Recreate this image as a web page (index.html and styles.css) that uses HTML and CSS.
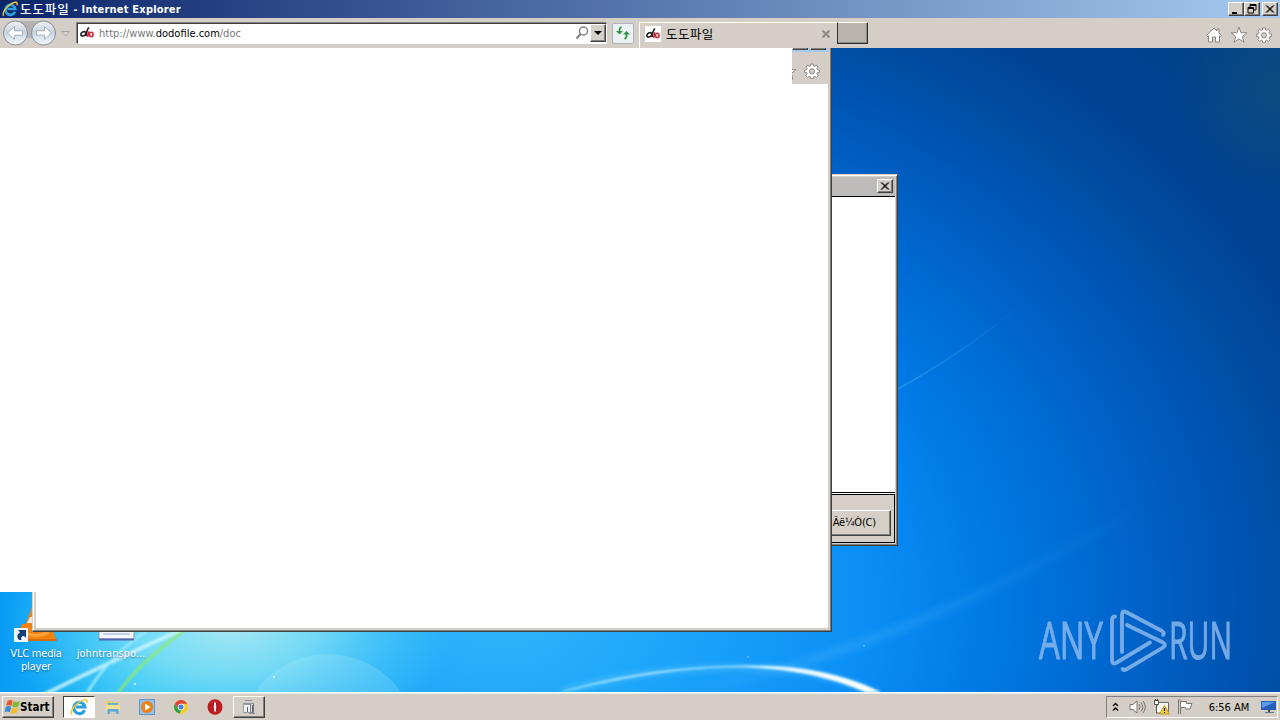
FILE: index.html
```
<!DOCTYPE html>
<html lang="ko">
<head>
    <meta charset="UTF-8">
    <title>도도파일 - Internet Explorer</title>
    <link rel="stylesheet" href="styles.css">
</head>
<body>
    <svg width="0" height="0" class="defs">
        <defs>
            <symbol id="ie" viewBox="0 0 16 16">
                <path d="M13 10.8A5 5 0 1 1 13.300 8H5.500" fill="none" stroke="#2b9fe0" stroke-width="2.700"/>
                <path d="M5.500 7.900h5" stroke="#2b9fe0" stroke-width="1.500"/>
                <path d="M1.700 14.800C-1 11 8 2 13.500 1.300c2-.2 2 1.500 1.300 3" fill="none" stroke="#f0c530" stroke-width="1.400"/>
            </symbol>
            <symbol id="gear" viewBox="0 0 16 16">
                <path d="M6.700 1h2.600l.3 2 1.100.5 1.700-1.300 1.800 1.900-1.300 1.600.5 1.100 2 .3v2.400l-2 .3-.5 1.200 1.300 1.600-1.800 1.900-1.700-1.300-1.100.5-.3 2H6.700l-.3-2-1.100-.5-1.700 1.300-1.800-1.900L3.100 11l-.5-1.200-2-.3V7.100l2-.3.5-1.100-1.300-1.600 1.800-1.900 1.700 1.300L6.400 3z" fill="#fff" stroke="#8b8681"/>
                <circle cx="8" cy="8.300" r="2.600" fill="#d4cec6" stroke="#8b8681"/>
            </symbol>
            <symbol id="star" viewBox="0 0 18 18">
                <path d="M9 1.200l2 5.500 5.900.1-4.600 3.600 1.600 5.800L9 12.900l-4.900 3.300 1.600-5.800L1.100 6.800l5.900-.1z" fill="#fff" stroke="#8b8681"/>
            </symbol>
            <symbol id="close" viewBox="0 0 10 10">
                <path d="M1 1.500l7 7M2 1.500l7 7M8 1.500l-7 7M9 1.500l-7 7" stroke="#000" stroke-width="1" fill="none"/>
            </symbol>
            <symbol id="site" viewBox="0 0 16 16">
                <path d="M10 2.500Q7.500 5 7.200 11M6.800 7.500c-1.800-1.800-5 0-4.900 2.200.1 2 3.400 1.600 4.800-.2z" fill="none" stroke="#222" stroke-width="1.700"/>
                <path d="M9.800 6.400L8.600 12" stroke="#c9283c" stroke-width="1.700"/>
                <ellipse cx="12.300" cy="9.400" rx="1.800" ry="2.200" fill="none" stroke="#c9283c" stroke-width="1.600"/>
            </symbol>
        </defs>
    </svg>

    <div class="screen">
        <div class="desktop">
            <svg class="wallpaper" width="1280" height="692" viewBox="0 0 1280 692">
                <defs>
                    <radialGradient id="sky" gradientUnits="userSpaceOnUse" cx="0" cy="0" r="1" gradientTransform="translate(500 600) scale(1125 875)">
                        <stop offset="0" stop-color="#2fb8f9"/>
                        <stop offset=".18" stop-color="#1aa2fa"/>
                        <stop offset=".33" stop-color="#0a8ef5"/>
                        <stop offset=".44" stop-color="#0079e4"/>
                        <stop offset=".54" stop-color="#0067d0"/>
                        <stop offset=".66" stop-color="#0053b0"/>
                        <stop offset=".78" stop-color="#004493"/>
                        <stop offset="1" stop-color="#004080"/>
                    </radialGradient>
                    <linearGradient id="left">
                        <stop offset="0" stop-color="#0a9bf5"/>
                        <stop offset=".35" stop-color="#28c4f8"/>
                        <stop offset="1" stop-color="#38c4f8" stop-opacity="0"/>
                    </linearGradient>
                    <radialGradient id="glow" gradientUnits="userSpaceOnUse" cx="0" cy="0" r="1" gradientTransform="translate(230 625) scale(225 130)">
                        <stop offset="0" stop-color="#a8e8f4"/>
                        <stop offset=".4" stop-color="#85e2f5" stop-opacity=".8"/>
                        <stop offset="1" stop-color="#4cd2f8" stop-opacity="0"/>
                    </radialGradient>
                    <radialGradient id="corner">
                        <stop offset="0" stop-color="#17507c" stop-opacity=".6"/>
                        <stop offset="1" stop-color="#17507c" stop-opacity="0"/>
                    </radialGradient>
                    <linearGradient id="arc" gradientUnits="userSpaceOnUse" x1="560" y1="0" x2="880" y2="0">
                        <stop offset="0" stop-color="#bdefff" stop-opacity=".7"/>
                        <stop offset=".6" stop-color="#dff8ff"/>
                        <stop offset="1" stop-color="#fff"/>
                    </linearGradient>
                    <linearGradient id="beam" gradientUnits="userSpaceOnUse" x1="690" y1="0" x2="1150" y2="0">
                        <stop offset="0" stop-color="#6cc8ff" stop-opacity="0"/>
                        <stop offset=".3" stop-color="#6cc8ff" stop-opacity=".2"/>
                        <stop offset="1" stop-color="#6cc8ff" stop-opacity="0"/>
                    </linearGradient>
                    <linearGradient id="ray" gradientUnits="userSpaceOnUse" x1="890" y1="0" x2="1020" y2="0">
                        <stop offset="0" stop-color="#5cc0ff" stop-opacity=".4"/>
                        <stop offset="1" stop-color="#5cc0ff" stop-opacity="0"/>
                    </linearGradient>
                    <filter id="soft" x="-20%" y="-50%" width="140%" height="200%"><feGaussianBlur stdDeviation="3"/></filter>
                    <filter id="edge" x="-20%" y="-50%" width="140%" height="200%"><feGaussianBlur stdDeviation=".8"/></filter>
                </defs>
                <rect width="1280" height="692" fill="url(#sky)"/>
                <rect y="560" width="430" height="132" fill="url(#left)"/>
                <rect y="490" width="460" height="202" fill="url(#glow)"/>
                <circle cx="1280" cy="90" r="110" fill="url(#corner)"/>
                <circle cx="328" cy="743" r="89" fill="#b8f0fa" opacity=".2"/>
                <path d="M690 692Q930 640 1150 500" fill="none" stroke="url(#beam)" stroke-width="10" filter="url(#soft)"/>
                <path d="M896 390Q965 352 1020 305" fill="none" stroke="url(#ray)" stroke-width="1.500"/>
                <path d="M562 692C640 668 720 666 765 668S850 682 878 694" fill="none" stroke="#7fd8ff" stroke-width="4" opacity=".5" filter="url(#soft)"/>
                <path d="M562 692C640 669 710 666 750 667Q815 670 866 692L880 692Q825 665 750 666Q665 666 562 692z" fill="url(#arc)" stroke="url(#arc)" stroke-width=".6" filter="url(#edge)"/>
                <g fill="none" filter="url(#edge)">
                    <path d="M43 695Q110 662 185 628" stroke="#d4f8ff" stroke-width="4" opacity=".8"/>
                    <path d="M87 693Q110 655 148 630" stroke="#9eeaff" stroke-width="2.500"/>
                    <path d="M118 693Q140 662 185 630" stroke="#8eea6b" stroke-width="2.500"/>
                </g>
                <g fill="#d8f8ff" opacity=".7">
                    <circle cx="135" cy="684" r="1.300"/><circle cx="274" cy="677" r="1.200"/>
                    <circle cx="748" cy="657" r=".8"/><circle cx="864" cy="646" r=".8"/>
                </g>
            </svg>

            <div class="shortcut vlc">
                <svg width="48" height="48" viewBox="0 0 48 48">
                    <path d="M24 1l12 31H12z" fill="#f08018"/>
                    <path d="M18 21h12l3 6H15z" fill="#e8e8e8"/>
                    <path d="M10 28h28l7 17H3z" fill="#f08210"/>
                    <path d="M12 34q12 8 24 0l1 4q-13 6-26 0z" fill="#f9a23c"/>
                    <path d="M3 44h42" stroke="#d96a0a" stroke-width="2"/>
                    <rect x="2" y="32" width="14" height="14" fill="#f4f7fb"/>
                    <path d="M7 44q-4-5 1-7.500L6 34h8v8l-2.200-2.200Q8 41 9.500 44z" fill="#123f78"/>
                </svg>
                <span>VLC media player</span>
            </div>
            <div class="shortcut doc">
                <svg width="48" height="48" viewBox="0 0 48 48">
                    <path d="M12 1h35v42H12z" fill="#f2f6fd" stroke="#8b9bc9"/>
                    <path d="M16 38h27" stroke="#9da6df"/>
                    <path d="M12 43.500h35" stroke="#5265a8" stroke-width="2"/>
                </svg>
                <span>johntranspo...</span>
            </div>

            <svg class="watermark" width="210" height="80" viewBox="0 0 210 80">
                <g class="watermark-text">
                    <text x="4" y="53" textLength="64" lengthAdjust="spacingAndGlyphs">ANY</text>
                    <text x="134" y="53" textLength="63" lengthAdjust="spacingAndGlyphs">RUN</text>
                </g>
                <path d="M80 10.500q-3 0-3 4V54q0 5 4 3L115 36.500M87 46V9q0-5 4-3l36 19q3 2 1 4M92 19l36 17.500q4 2.500 0 5L92 63q-4 2-4.500 0" fill="none" stroke="#8ab8ed" stroke-width="3.800" stroke-linecap="round"/>
            </svg>

            <div class="dialog">
                <div class="dialog-title"><span class="win-btn"><svg width="10" height="10"><use href="#close"/></svg></span></div>
                <div class="dialog-body"></div>
                <div class="dialog-footer"><div class="dialog-btn">Ãë¼Ò(C)</div></div>
            </div>

            <div class="popup">
                <div class="popup-top">
                    <div class="popup-title"><span class="win-btn"></span><span class="win-btn"></span></div>
                    <div class="popup-tools">
                        <svg width="18" height="18"><use href="#star"/></svg>
                        <svg width="16" height="16"><use href="#gear"/></svg>
                    </div>
                </div>
            </div>

            <div class="browser">
                <div class="titlebar">
                    <svg width="16" height="16"><use href="#ie"/></svg>
                    <div class="title"><span class="title-ko">도도파일</span><span>- Internet Explorer</span></div>
                    <div class="win-buttons">
                        <span class="win-btn"><svg width="10" height="10"><path d="M1 8h5v2H1z"/></svg></span>
                        <span class="win-btn"><svg width="10" height="10"><path d="M3 4V.500h6V6H7M3 1.500h6M1 3.500h5.500V9H1zM1 4.500h5" fill="none" stroke="#000"/></svg></span>
                        <span class="win-btn gap"><svg width="10" height="10"><use href="#close"/></svg></span>
                    </div>
                </div>
                <div class="toolbar">
                    <svg class="nav" width="74" height="30" viewBox="0 0 74 30">
                        <defs>
                            <linearGradient id="btn" x2="0" y2="1">
                                <stop offset="0" stop-color="#f1f4f6"/>
                                <stop offset=".45" stop-color="#c8d3de"/>
                                <stop offset="1" stop-color="#f4fbff"/>
                            </linearGradient>
                        </defs>
                        <path d="M15 3H43V22Q29 18 15 22z" fill="#b5b3b1"/>
                        <circle cx="15.500" cy="15" r="12" fill="url(#btn)" stroke="#858e97"/>
                        <circle cx="43.500" cy="15" r="12" fill="url(#btn)" stroke="#858e97"/>
                        <path d="M7.500 15l7-6.500v4.300h8v4.400h-8v4.300z" fill="#fff" stroke="#a3afb9"/>
                        <path d="M51.500 15l-7-6.500v4.300h-8v4.400h8v4.300z" fill="#fff" stroke="#a3afb9"/>
                        <path d="M61.500 13.500h8l-4 4.500z" fill="#d7d2cb" stroke="#aaa59d"/>
                    </svg>
                    <div class="address">
                        <svg width="16" height="16"><use href="#site"/></svg>
                        <span class="url">http://www.<b>dodofile.com</b>/doc</span>
                        <svg width="15" height="16" viewBox="0 0 15 16"><circle cx="8.500" cy="6" r="4" fill="none" stroke="#828282" stroke-width="1.500"/><path d="M5.500 9L1.500 13.500" stroke="#828282" stroke-width="2.200"/></svg>
                        <span class="drop"><svg width="8" height="4"><path d="M0 0h8L4 4z"/></svg></span>
                    </div>
                    <div class="refresh">
                        <svg width="16" height="16" viewBox="0 0 16 16" fill="none" stroke="#2f9544" stroke-width="1.700">
                            <path d="M6.500 2Q4 3 4.500 7"/><path d="M9.500 14Q12 13 11.500 8"/>
                            <path d="M1 6h7L4.500 9.500zM8 9.500h7L11.500 6z" fill="#2f9544" stroke="none"/>
                        </svg>
                    </div>
                    <div class="tab">
                        <span class="favicon"><svg width="16" height="16"><use href="#site"/></svg></span>
                        <span class="tab-title">도도파일</span>
                        <svg width="8" height="8"><path d="M.500.500l7 7M7.500.500l-7 7" stroke="#8d8984" stroke-width="2"/></svg>
                    </div>
                    <div class="new-tab"></div>
                    <div class="tools">
                        <svg width="18" height="18" viewBox="0 0 18 18"><path d="M1.500 9.500L9 2l3 3V3h2v4l2.500 2.500-1 1-1-.8V16h-4v-5h-3v5h-4V9.700l-1 .8z" fill="#fff" stroke="#8b8681"/></svg>
                        <svg width="18" height="18"><use href="#star"/></svg>
                        <svg width="16" height="18" viewBox="0 0 16 16"><use href="#gear"/></svg>
                    </div>
                </div>
                <div class="page"></div>
            </div>
        </div>

        <div class="taskbar">
            <div class="start">
                <svg width="16" height="16" viewBox="0 0 16 16">
                    <path d="M3.500 2q2.500-1.800 5.200-.3L7.400 7q-2.500-1.300-5.300 0z" fill="#e9582b"/>
                    <path d="M9.500 2.300q3 1.500 6.300-.2L14.300 7.600q-3 1.500-6.200 0z" fill="#7fbb35"/>
                    <path d="M1.900 7.900q2.700-1.500 5.300-.2L5.900 13.200q-2.700-1.500-5.400 0z" fill="#328fd8"/>
                    <path d="M7.900 8.400q3 1.500 6.200 0l-1.400 5.700q-3 1.500-6.200-.2z" fill="#f6bf2a"/>
                </svg>
                <span>Start</span>
            </div>
            <div class="task active"><svg width="18" height="18"><use href="#ie"/></svg></div>
            <div class="task">
                <svg width="16" height="16" viewBox="0 0 16 16">
                    <path d="M1 2h5l1 1h7v9H1z" fill="#e9cb6a"/><path d="M3 4h10v3H3z" fill="#62b6d4"/>
                    <path d="M1 6h14v6H1z" fill="#f6e08f"/><path d="M2.500 15v-5h11v5H11v-2.500H5V15z" fill="#58a9df"/>
                </svg>
            </div>
            <div class="task">
                <svg width="16" height="16" viewBox="0 0 16 16">
                    <rect x=".500" y=".500" width="15" height="15" fill="#95bfe5" stroke="#6099cd"/><circle cx="8" cy="8" r="6" fill="#ef8110"/><path d="M6 4.500l5.500 3.500L6 11.500z" fill="#fff"/>
                </svg>
            </div>
            <div class="task">
                <svg width="14" height="14" viewBox="0 0 14 14">
                    <circle cx="7" cy="7" r="7" fill="#f7cd2c"/><path d="M1 3.500A7 7 0 0 1 13.100 3.700H7L4 8.700z" fill="#df4435"/>
                    <path d="M1 3.500l3 5.200 3 1.500-1.500 3.600A7 7 0 0 1 1 3.500z" fill="#2b9d50"/><circle cx="7" cy="7" r="3.300" fill="#fff"/><circle cx="7" cy="7" r="2.500" fill="#477fe5"/>
                </svg>
            </div>
            <div class="task">
                <svg width="16" height="16" viewBox="0 0 16 16"><ellipse cx="8" cy="8" rx="7.500" ry="7.700" fill="#bd1c20"/><ellipse cx="8" cy="8" rx="1.900" ry="5.500" fill="#f8e8e8" stroke="#8a0d11"/></svg>
            </div>
            <div class="task raised">
                <svg width="18" height="18" viewBox="0 0 18 18">
                    <path d="M3.500 6.500h7v8h-7z" fill="#f1f2f5" stroke="#989ba7"/><path d="M10.500 5.500h3v9h-3z" fill="#e2e2e6" stroke="#777985"/>
                    <path d="M5 2.500h7M3 5.500h10M9 15.500h6" stroke="#8d8f9b"/><path d="M7.500 9v5M12.500 7v7" stroke="#5a5c68"/>
                </svg>
            </div>
            <div class="tray">
                <svg width="7" height="10" viewBox="0 0 7 10"><path d="M1 4l2.500-2.500L6 4M1 8.500L3.500 6 6 8.500" fill="none" stroke="#000" stroke-width="1.300"/></svg>
                <svg width="17" height="16" viewBox="0 0 17 16"><path d="M1 5.500h3L8 2v12l-4-3.500H1z" fill="#fff" stroke="#77736e"/><path d="M10 5q2 3 0 6M12 3.500q3.500 4.500 0 9M14 2q4.500 6 0 12" fill="none" stroke="#77736e"/></svg>
                <svg width="17" height="16" viewBox="0 0 17 16">
                    <path d="M4.500 3.500h11v10h-11z" fill="#f4f4f0" stroke="#6d6962"/><path d="M1.500 1.500h4v4h-4zM3.500 5v9h5" fill="#fff" stroke="#55524d"/><path d="M2.500 0v2M4.500 0v2" stroke="#333"/>
                    <path d="M11.500 6.500l4.800 8.500H6.700z" fill="#f4d32c" stroke="#c89c13"/><path d="M11.500 9v3M11.500 13v1" stroke="#222" stroke-width="1.200"/>
                </svg>
                <svg width="17" height="16" viewBox="0 0 17 16"><path d="M1.500 1v14M3.500 2v13M1.500 1h2" stroke="#77736e"/><path d="M3.500 2.500h6v2h5.500l-2 5.500H9L8.500 8.500h-5z" fill="#fff" stroke="#77736e"/></svg>
                <span class="clock">6:56 AM</span>
                <svg width="16" height="14" viewBox="0 0 16 14"><path d="M0 1h15v9H0z" fill="#255fb8"/><path d="M1 2h13L1 8z" fill="#5d9be4"/><path d="M7 10h2v2H7z" fill="#444"/><path d="M4 12h9v1H4z" fill="#64748d"/></svg>
            </div>
        </div>
    </div>
</body>
</html>
```
FILE: styles.css
```
* {
    box-sizing: border-box;
}

body {
    margin: 0;
    overflow: hidden;
    font-family: "DejaVu Sans Condensed", "DejaVu Sans", "Noto Sans CJK KR", sans-serif;
    font-size: 11px;
    color: #000;
}

svg {
    display: block;
    flex: none;
}

.defs {
    position: absolute;
}

.screen {
    display: flex;
    flex-direction: column;
    width: 1280px;
    height: 720px;
}

.desktop {
    position: relative;
    height: 692px;
    overflow: hidden;
}

.wallpaper {
    position: absolute;
}

/* desktop icons */
.shortcut {
    position: absolute;
    display: flex;
    flex-direction: column;
    align-items: center;
    gap: 3px;
    width: 72px;
    color: #fff;
    line-height: 13px;
    letter-spacing: -0.2px;
    text-align: center;
    text-shadow: 0 1px 2px rgba(0, 50, 100, 0.6);
}

.vlc {
    left: 0;
    top: 596px;
}

.vlc span {
    width: 56px;
}

.doc {
    left: 75px;
    top: 596px;
    letter-spacing: 0;
}

.watermark {
    position: absolute;
    left: 1035px;
    top: 606px;
    overflow: visible;
    opacity: 0.85;
}

.watermark-text {
    font-family: "Open Sans", sans-serif;
    font-size: 51px;
    fill: #8ab8ed;
    stroke: #8ab8ed;
    stroke-width: 1px;
}

/* windows */
.win-btn {
    display: flex;
    align-items: center;
    justify-content: center;
    width: 16px;
    height: 14px;
    background: #d4d0c8;
    border: 1px solid;
    border-color: #fff #404040 #404040 #fff;
    box-shadow: inset -1px -1px #808080;
}

.dialog {
    position: absolute;
    left: 600px;
    top: 174px;
    display: flex;
    flex-direction: column;
    width: 298px;
    height: 372px;
    padding: 2px 1px 1px;
    background: #d5cfc7;
    border: 1px solid;
    border-color: #d5cfc7 #404040 #404040 #d5cfc7;
    box-shadow: inset 0 1px #fff, inset -1px -1px #808080;
}

.dialog-title {
    display: flex;
    align-items: flex-start;
    justify-content: flex-end;
    height: 20px;
    margin-right: 1px;
    padding: 2px 2px 0 0;
    background: #bdbcba;
    border-bottom: 1px solid #000;
}

.dialog-body {
    flex: 1;
    margin-right: 1px;
    background: #fff;
    border-bottom: 1px solid #000;
}

.dialog-footer {
    display: flex;
    align-items: center;
    justify-content: flex-end;
    height: 49px;
    margin: 1px 1px 1px 0;
    padding: 9px 3px 0 0;
    border: 1px solid #000;
    box-shadow: 0 -1px #fff;
}

.dialog-btn {
    width: 76px;
    height: 26px;
    padding-right: 14px;
    line-height: 23px;
    text-align: right;
    letter-spacing: -0.2px;
    border: 1px solid;
    border-color: #fff #404040 #404040 #fff;
    box-shadow: inset -1px -1px #808080;
}

.popup {
    position: absolute;
    left: 32px;
    top: 30px;
    width: 800px;
    height: 602px;
    padding-right: 2px;
    background: #fff;
    border: 1px solid;
    border-color: #d4d0c8 #404040 #404040 #d4d0c8;
    box-shadow: inset -1px -1px #808080, inset 1px 0 #fff, inset 3px 0 #d4cec6, inset -3px -3px #d4cec6;
}

.popup-top {
    height: 53px;
    background: #d4cec6;
}

.popup-title {
    display: flex;
    justify-content: flex-end;
    gap: 2px;
    height: 21px;
    padding: 5px 3px 0 0;
    background: #a6caf0;
}

.popup-tools {
    display: flex;
    justify-content: flex-end;
    gap: 7px;
    padding: 11px 9px 0 0;
}

.browser {
    position: absolute;
    left: 0;
    top: 0;
    width: 1280px;
}

.titlebar {
    display: flex;
    align-items: center;
    gap: 2px;
    height: 18px;
    padding: 0 2px;
    color: #fff;
    background: linear-gradient(90deg, #0a246a, #a6caf0);
}

.title {
    display: flex;
    flex: 1;
    align-items: center;
    gap: 4px;
    height: 18px;
    font-weight: bold;
    letter-spacing: 0.2px;
    white-space: nowrap;
}

.title-ko {
    font-family: "Noto Sans CJK KR", sans-serif;
    font-size: 12.5px;
    font-weight: 500;
    line-height: 18px;
    letter-spacing: 0.9px;
}

.win-buttons {
    display: flex;
}

.win-buttons .gap {
    margin-left: 2px;
}

.toolbar {
    display: flex;
    align-items: center;
    height: 30px;
    padding-right: 8px;
    background: #d4cec6;
}

.address {
    display: flex;
    align-items: center;
    width: 530px;
    height: 21px;
    margin: 0 5px 0 3px;
    padding-left: 1px;
    background: #fff;
    border: 1px solid;
    border-color: #404040 #fff #fff #404040;
    box-shadow: -1px -1px #808080;
}

.url {
    flex: 1;
    margin-left: 4px;
    color: #777;
}

.url b {
    font-weight: normal;
    color: #000;
}

.drop {
    display: flex;
    align-items: center;
    justify-content: center;
    width: 16px;
    height: 18px;
    background: #d4d0c8;
    border: 1px solid;
    border-color: #fff #404040 #404040 #fff;
    box-shadow: inset -1px -1px #808080;
}

.refresh {
    display: flex;
    align-items: center;
    justify-content: center;
    width: 22px;
    height: 21px;
    background: #edf1f3;
    border: 1px solid #a9b5c1;
    border-radius: 2px;
}

.tab {
    display: flex;
    align-items: center;
    align-self: flex-end;
    width: 198px;
    height: 26px;
    margin-left: 5px;
    padding: 0 7px 4px 5px;
    border-top: 1px solid #fff;
    border-left: 1px solid #fff;
}

.favicon {
    background: #fff;
}

.tab-title {
    flex: 1;
    margin-left: 5px;
    font-family: "Noto Sans CJK KR", sans-serif;
    font-size: 12.5px;
    line-height: 18px;
    letter-spacing: 0.4px;
}

.new-tab {
    width: 31px;
    height: 22px;
    background: #b9b4ad;
    border: 1px solid #303030;
    border-top-color: #fff;
    box-shadow: inset -1px -1px #888;
}

.tools {
    display: flex;
    gap: 8px;
    margin-top: 4px;
    margin-left: auto;
}

.tools svg:first-child {
    margin-right: -1px;
}

.page {
    width: 792px;
    height: 544px;
    background: #fff;
}

/* taskbar */
.taskbar {
    display: flex;
    align-items: center;
    height: 28px;
    padding: 1px 2px 0;
    background: #d4cec6;
    border-top: 1px solid #fff;
    box-shadow: inset 0 1px #ece8e2;
}

.start {
    display: flex;
    align-items: center;
    width: 52px;
    height: 22px;
    margin-right: 9px;
    padding-left: 1px;
    font-size: 11.5px;
    font-weight: bold;
    border: 1px solid;
    border-color: #fff #404040 #404040 #fff;
    box-shadow: inset -1px -1px #808080;
}

.task {
    display: flex;
    align-items: center;
    justify-content: center;
    width: 32px;
    height: 22px;
    margin-right: 2px;
}

.active {
    background: #fff;
    border: 1px solid;
    border-color: #404040 #fff #fff #404040;
}

.raised {
    border: 1px solid;
    border-color: #fff #404040 #404040 #fff;
    box-shadow: inset -1px -1px #808080;
}

.tray {
    display: flex;
    align-items: center;
    width: 172px;
    height: 22px;
    margin-left: auto;
    padding-left: 5px;
    border: 1px solid;
    border-color: #808080 #fff #fff #808080;
}

.tray svg + svg {
    margin-left: 7px;
}

.tray svg:nth-child(2) {
    margin-left: 10px;
}

.clock {
    flex: 1;
    padding-left: 3px;
    text-align: center;
    white-space: nowrap;
}
```
